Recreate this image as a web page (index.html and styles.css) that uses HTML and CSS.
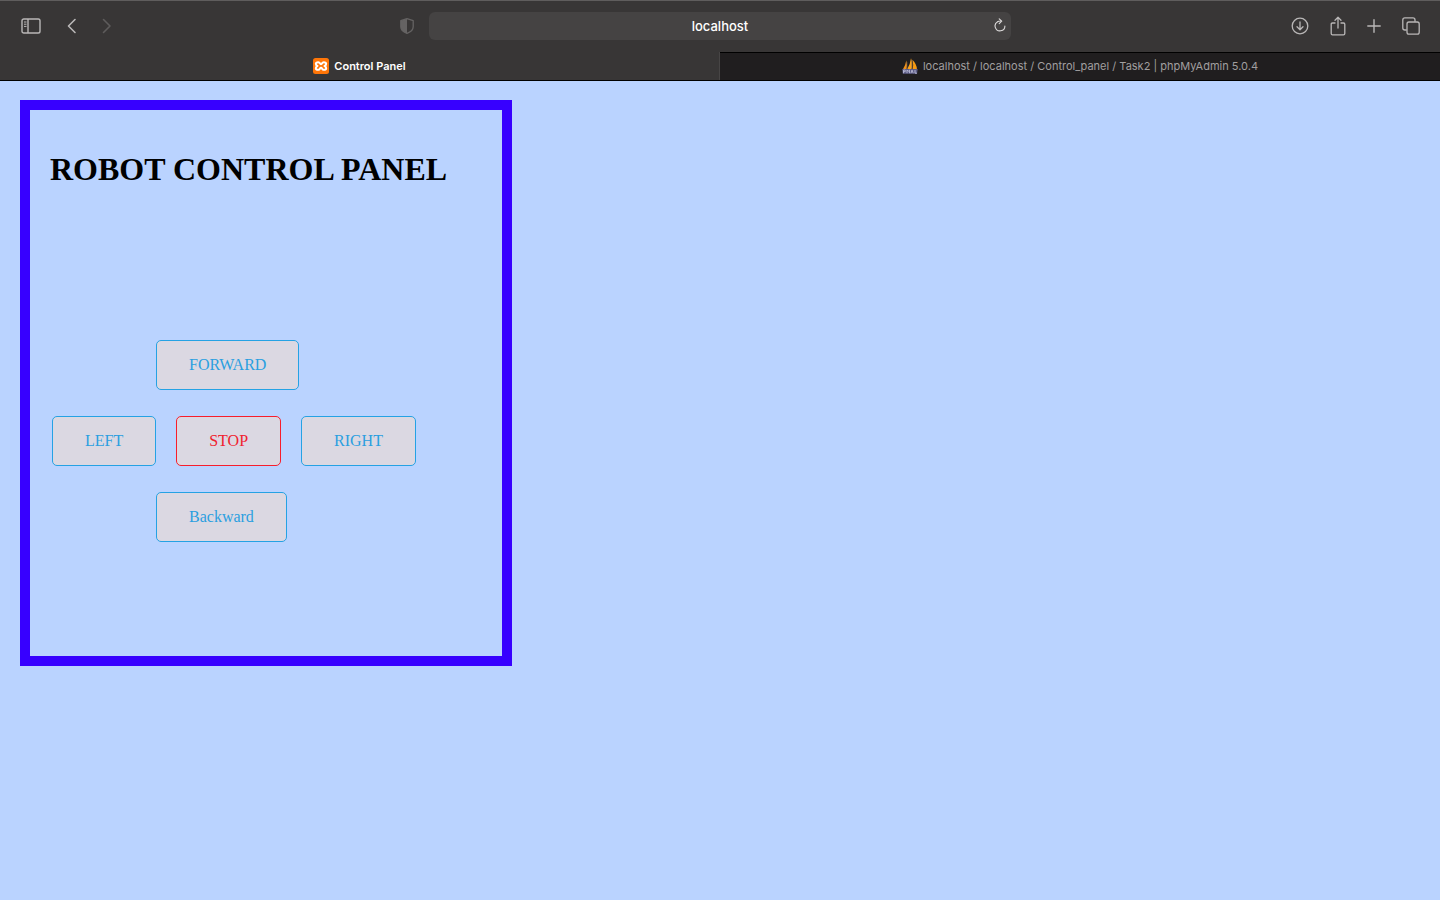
FILE: index.html
```html
<!DOCTYPE html>
<html lang="en">
<head>
<meta charset="utf-8">
<meta name="viewport" content="width=device-width, initial-scale=1">
<title>Control Panel</title>
<link rel="stylesheet" href="styles.css">
</head>
<body>
<header class="browser">
  <div class="toolbar">
    <div class="tools tools-left">
      <button class="tool sidebar" type="button" aria-label="Show sidebar">
        <svg width="20" height="16" viewBox="0 0 20 16" fill="none" stroke="currentColor"><rect x="1" y="1" width="18" height="14" rx="1.8" stroke-width="1.4"/><path d="M7 1v14" stroke-width="1.4"/><path d="M3 4h2.5M3 6.2h2.5M3 8.4h2.5" stroke-width="1"/></svg>
      </button>
      <button class="tool" type="button" aria-label="Back">
        <svg width="10" height="16" viewBox="0 0 10 16" fill="none" stroke="currentColor" stroke-width="1.6" stroke-linecap="round" stroke-linejoin="round"><path d="M8 1.5 1.5 8 8 14.5"/></svg>
      </button>
      <button class="tool forward" type="button" aria-label="Forward" disabled>
        <svg width="10" height="16" viewBox="0 0 10 16" fill="none" stroke="currentColor" stroke-width="1.6" stroke-linecap="round" stroke-linejoin="round"><path d="M1.5 1.5 8 8 1.5 14.5"/></svg>
      </button>
      <button class="tool shield" type="button" aria-label="Privacy report">
        <svg width="14" height="16" viewBox="0 0 14 16" fill="none"><path d="M7 .7 13.2 2.700v6C13.200 11.700 10.500 14 7 15.400 3.500 14 .8 11.700.8 8.700v-6Z" stroke="currentColor" stroke-width="1.3" stroke-linejoin="round"/><path d="M7 .7v14.700C3.500 14 .8 11.700.8 8.700v-6Z" fill="currentColor"/></svg>
      </button>
    </div>
    <div class="address">
      <input class="address-input" type="text" value="localhost" aria-label="Address">
      <button class="tool reload" type="button" aria-label="Reload">
        <svg width="12" height="14" viewBox="0 0 12 14" fill="none" stroke="currentColor" stroke-width="1.1" stroke-linecap="round" stroke-linejoin="round"><path d="M3.6 3.7A4.900 4.900 0 1 0 10.900 8M3.600 3.700C4.500 3.100 5.600 2.900 7.500 3.100M5.200.8l2.500 2.400-2.500 2.400"/></svg>
      </button>
    </div>
    <div class="tools tools-right">
      <button class="tool" type="button" aria-label="Downloads">
        <svg width="18" height="18" viewBox="0 0 18 18" fill="none" stroke="currentColor" stroke-width="1.3" stroke-linecap="round" stroke-linejoin="round"><circle cx="9" cy="9" r="7.8"/><path d="M9 5v7.500M6 9.700l3 3 3-3"/></svg>
      </button>
      <button class="tool" type="button" aria-label="Share">
        <svg width="16" height="20" viewBox="0 0 16 20" fill="none" stroke="currentColor" stroke-width="1.3" stroke-linecap="round" stroke-linejoin="round"><path d="M5 7H2.500Q1.200 7 1.200 8.300v9.200q0 1.300 1.300 1.300h11q1.300 0 1.300-1.300V8.300Q14.800 7 13.500 7H11M8 12V1.500M5 4.300l3-3 3 3"/></svg>
      </button>
      <button class="tool" type="button" aria-label="New tab">
        <svg width="14" height="14" viewBox="0 0 14 14" fill="none" stroke="currentColor" stroke-width="1.4" stroke-linecap="round"><path d="M7 .8v12.400M.8 7h12.400"/></svg>
      </button>
      <button class="tool" type="button" aria-label="Tab overview">
        <svg width="18" height="18" viewBox="0 0 18 18" fill="none" stroke="currentColor" stroke-width="1.3" stroke-linejoin="round"><rect x="5" y="5" width="12.2" height="12.2" rx="1.9"/><path d="M4.700 13H2.900Q.8 13 .8 10.900v-8Q.8.8 2.900.8h8Q13 .8 13 2.900v1.800"/></svg>
      </button>
    </div>
  </div>
  <nav class="tabs" aria-label="Tabs">
    <a class="tab tab-active" href="#panel">
      <svg width="16" height="16" viewBox="0 0 16 16"><rect width="16" height="16" rx="2.5" fill="#ff7608"/><path d="M5.300 4.200C1.800 4.200 2.500 7.200 4.500 8 2.500 8.800 1.800 11.800 5.300 11.800 7.200 11.800 6.600 9.800 8 9.800S8.800 11.800 10.700 11.800C14.200 11.800 13.500 8.800 11.500 8 13.500 7.200 14.200 4.200 10.700 4.200 8.800 4.200 9.400 6.200 8 6.200S7.200 4.200 5.300 4.200Z" fill="none" stroke="#fff" stroke-width="2" stroke-linejoin="round"/></svg>
      <span>Control Panel</span>
    </a>
    <a class="tab tab-inactive" href="#database">
      <svg width="16" height="16" viewBox="0 0 16 16"><path d="M4.300 2.500Q5.800 7 4.500 11.500H.8Q3.500 7.500 4.300 2.500Z" fill="#f09018"/><path d="M9 .3Q11.200 6 9.500 11.500H5Q8.300 6.500 9 .3Z" fill="#f8a11c"/><path d="M10.400 1.800Q14.700 6 15 11.500H10.500Q11.800 6.500 10.400 1.800Z" fill="#f79a12"/><path d="M4.900 4v7.500M9.900 2v9.500" stroke="#80654f" stroke-width=".7"/><path d="M.3 11h15.400L15 15.700H.8Z" fill="#5d5d87"/><path d="M1.500 15.200v-3.200h1.700v1.700H1.500M5 15.200v-3.200l1.200 1.300L7.500 12v3.200M9 15.200l1-3.200 1.200 3.200M13 12v3.200h2" fill="none" stroke="#b8b8d2" stroke-width=".9"/></svg>
      <span>localhost / localhost / Control_panel / Task2 | phpMyAdmin 5.0.4</span>
    </a>
  </nav>
</header>
<main class="page">
  <section class="panel" id="panel">
    <h1 class="title">ROBOT CONTROL PANEL</h1>
    <div class="controls">
      <div class="row row-inset"><button class="command" type="button">FORWARD</button></div>
      <div class="row">
        <button class="command" type="button">LEFT</button>
        <button class="command command-stop" type="button">STOP</button>
        <button class="command" type="button">RIGHT</button>
      </div>
      <div class="row row-inset"><button class="command" type="button">Backward</button></div>
    </div>
  </section>
</main>
</body>
</html>
```
FILE: styles.css
```css
* {
  box-sizing: border-box;
}

body {
  margin: 0;
  min-height: 100vh;
  background: #bad3ff;
  font-family: "Liberation Serif", "Times New Roman", serif;
}

.browser {
  background: #383636;
  border-top: 1px solid #5f5d5d;
  border-bottom: 1px solid #000;
  font-family: Inter, "Liberation Sans", sans-serif;
}

.toolbar {
  display: grid;
  grid-template-columns: 1fr minmax(0, 582px) 1fr;
  align-items: center;
  height: 51px;
  padding-bottom: 2px;
}

.tools {
  display: flex;
  align-items: center;
}

.tools-left {
  padding: 0 15px 0 21px;
}

.tools-right {
  justify-content: flex-end;
  gap: 21px;
  padding-right: 20px;
}

.tool {
  display: flex;
  padding: 0;
  border: 0;
  background: none;
  color: #b9b7b7;
}

.sidebar {
  margin-right: 26px;
}

.forward {
  margin-left: 25px;
  color: #5e5c5c;
}

.shield {
  margin-left: auto;
  color: #656363;
}

.address {
  position: relative;
}

.address-input {
  display: block;
  width: 100%;
  height: 28px;
  padding: 0 28px;
  border: 0;
  border-radius: 6px;
  background: #454343;
  color: #fff;
  font: 500 13px/28px Inter, "Liberation Sans", sans-serif;
  text-align: center;
}

.reload {
  position: absolute;
  top: 6px;
  right: 5px;
  color: #dddbdb;
}

.tabs {
  display: grid;
  grid-template-columns: 1fr 1fr;
}

.tab {
  display: flex;
  align-items: center;
  justify-content: center;
  gap: 5px;
  height: 28px;
  padding-bottom: 1px;
  font-size: 11px;
  line-height: 16px;
  text-decoration: none;
  white-space: nowrap;
}

.tab-active {
  border-right: 1px solid #474545;
  color: #fff;
  font-weight: 600;
}

.tab-inactive {
  border-top: 1px solid #000;
  padding-bottom: 2px;
  background: #201e1f;
  color: #a19f9f;
}

.page {
  padding: 19px 20px;
}

.panel {
  max-width: 492px;
  padding: 40px 20px 114px;
  border: 10px solid #3700ff;
}

.title {
  margin: 0 0 152px;
  font-size: 32px;
  line-height: 38px;
}

.controls {
  display: grid;
  gap: 26px;
}

.row {
  display: flex;
  gap: 20px;
  padding-left: 2px;
}

.row-inset {
  padding-left: 106px;
}

.command {
  padding: 15px 32px;
  border: 1px solid #25a2e4;
  border-radius: 5px;
  background: #dbd8e2;
  color: #2a9fe0;
  font: 16px/18px "Liberation Serif", "Times New Roman", serif;
}

.command-stop {
  border-color: #f71e2c;
  color: #f0222f;
}
```
